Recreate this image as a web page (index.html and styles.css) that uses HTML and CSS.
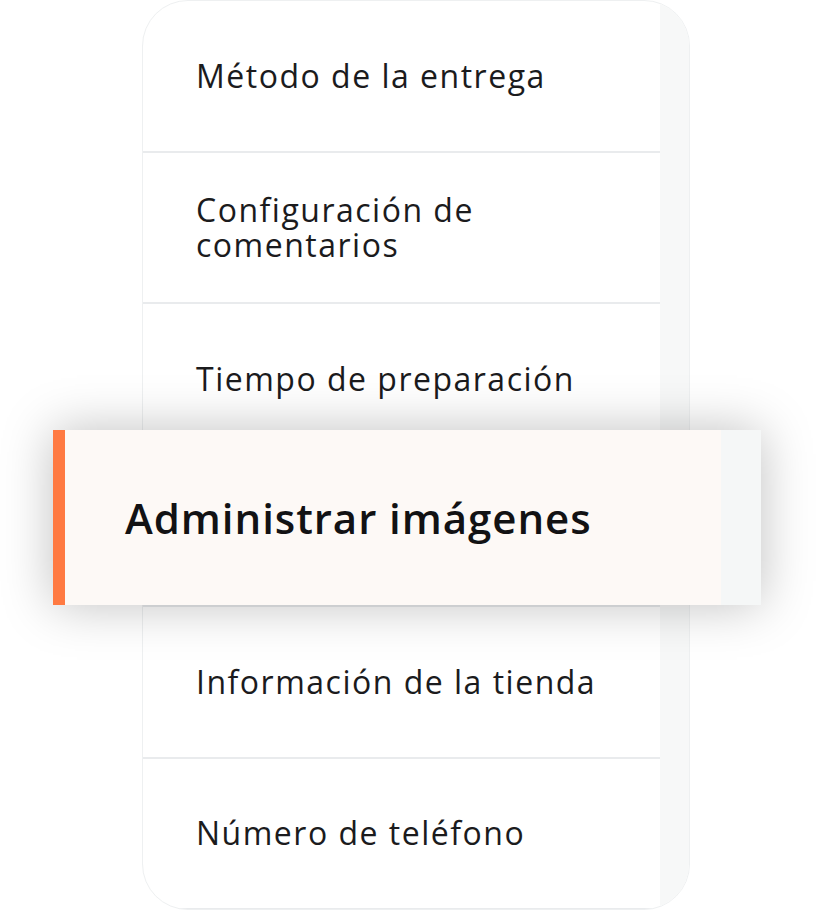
FILE: index.html
```html
<!DOCTYPE html>
<html lang="es">
<head>
<meta charset="utf-8">
<title>Menú</title>
<link rel="stylesheet" href="styles.css">
</head>
<body>
<div class="stage">
  <div class="card">
    <ul class="list">
      <li class="item"><span class="label">Método de la entrega</span></li>
      <li class="item"><span class="label"><span class="line">Configuración de</span><span class="line">comentarios</span></span></li>
      <li class="item"><span class="label">Tiempo de preparación</span></li>
      <li class="item is-active"><span class="label">Administrar imágenes</span></li>
      <li class="item"><span class="label">Información de la tienda</span></li>
      <li class="item"><span class="label">Número de teléfono</span></li>
    </ul>
    <div class="rail"></div>
  </div>
  <div class="highlight">
    <div class="accent"></div>
    <div class="hl-body"><span class="hl-text">Administrar imágenes</span></div>
    <div class="hl-rail"></div>
  </div>
</div>
</body>
</html>
```

FILE: styles.css
```css
html, body {
  margin: 0;
  padding: 0;
  background: #ffffff;
}
.stage {
  position: relative;
  width: 828px;
  height: 914px;
  overflow: hidden;
  font-family: "Open Sans", "Noto Sans", sans-serif;
  color: #1b1b1d;
}
.card {
  margin-left: 142px;
  width: 548px;
  height: 910px;
  box-sizing: border-box;
  border: 1px solid #eef0f1;
  border-radius: 46px;
  overflow: hidden;
  display: flex;
  background: #ffffff;
}
.list {
  list-style: none;
  margin: 0;
  padding: 0;
  flex: 1;
}
.item {
  box-sizing: border-box;
  height: 151.5px;
  border-bottom: 2px solid #e9ebed;
  display: flex;
  align-items: center;
  padding-left: 53px;
  font-size: 32px;
  line-height: 36px;
  letter-spacing: 1.5px;
}
.label {
  display: flex;
  flex-direction: column;
}
.line {
  display: block;
  height: 35px;
  line-height: 35px;
  overflow: visible;
}
.item.is-active .label {
  visibility: hidden;
}
.rail {
  width: 29px;
  background: #f7f8f8;
}
.highlight {
  position: absolute;
  left: 53px;
  top: 430px;
  width: 708px;
  height: 175px;
  display: flex;
  background: #fdf9f6;
  box-shadow: 0 0 48px rgba(0, 0, 0, 0.25);
}
.accent {
  width: 12px;
  background: #ff7a42;
}
.hl-body {
  flex: 1;
  display: flex;
  align-items: center;
  padding-left: 60px;
}
.hl-text {
  font-size: 42px;
  font-weight: 600;
  color: #121214;
  letter-spacing: 0.95px;
}
.hl-rail {
  width: 40px;
  background: #f5f7f7;
}
```
